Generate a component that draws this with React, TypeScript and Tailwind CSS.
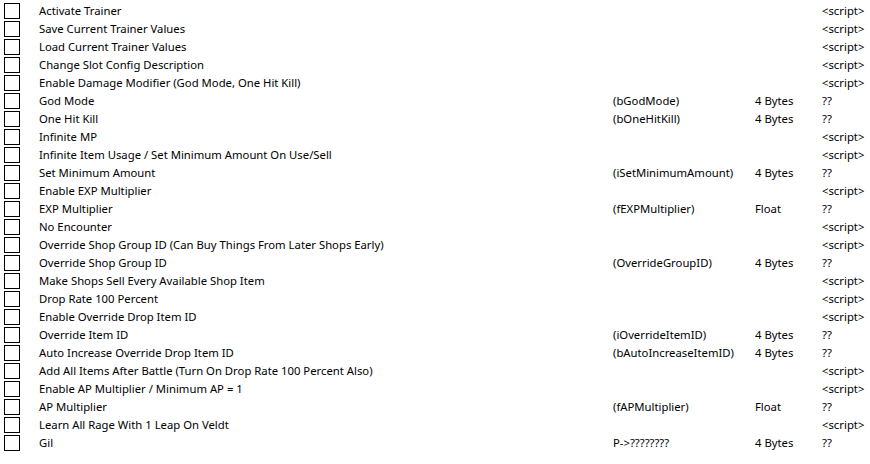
import React from 'react';

type Row = {
  desc: string;
  addr?: string;
  type?: string;
  value: string;
};

const rows: Row[] = [
  { desc: 'Activate Trainer', value: '<script>' },
  { desc: 'Save Current Trainer Values', value: '<script>' },
  { desc: 'Load Current Trainer Values', value: '<script>' },
  { desc: 'Change Slot Config Description', value: '<script>' },
  { desc: 'Enable Damage Modifier (God Mode, One Hit Kill)', value: '<script>' },
  { desc: 'God Mode', addr: '(bGodMode)', type: '4 Bytes', value: '??' },
  { desc: 'One Hit Kill', addr: '(bOneHitKill)', type: '4 Bytes', value: '??' },
  { desc: 'Infinite MP', value: '<script>' },
  { desc: 'Infinite Item Usage / Set Minimum Amount On Use/Sell', value: '<script>' },
  { desc: 'Set Minimum Amount', addr: '(iSetMinimumAmount)', type: '4 Bytes', value: '??' },
  { desc: 'Enable EXP Multiplier', value: '<script>' },
  { desc: 'EXP Multiplier', addr: '(fEXPMultiplier)', type: 'Float', value: '??' },
  { desc: 'No Encounter', value: '<script>' },
  { desc: 'Override Shop Group ID (Can Buy Things From Later Shops Early)', value: '<script>' },
  { desc: 'Override Shop Group ID', addr: '(OverrideGroupID)', type: '4 Bytes', value: '??' },
  { desc: 'Make Shops Sell Every Available Shop Item', value: '<script>' },
  { desc: 'Drop Rate 100 Percent', value: '<script>' },
  { desc: 'Enable Override Drop Item ID', value: '<script>' },
  { desc: 'Override Item ID', addr: '(iOverrideItemID)', type: '4 Bytes', value: '??' },
  { desc: 'Auto Increase Override Drop Item ID', addr: '(bAutoIncreaseItemID)', type: '4 Bytes', value: '??' },
  { desc: 'Add All Items After Battle (Turn On Drop Rate 100 Percent Also)', value: '<script>' },
  { desc: 'Enable AP Multiplier / Minimum AP = 1', value: '<script>' },
  { desc: 'AP Multiplier', addr: '(fAPMultiplier)', type: 'Float', value: '??' },
  { desc: 'Learn All Rage With 1 Leap On Veldt', value: '<script>' },
  { desc: 'Gil', addr: 'P->????????', type: '4 Bytes', value: '??' },
];

export default function App() {
  return (
    <div
      className="w-[870px] h-[464px] pt-[2px] bg-white text-black text-[11.3px] overflow-hidden"
      style={{ fontFamily: '"Noto Sans", "Open Sans", sans-serif' }}
    >
      {rows.map((r, i) => (
        <div key={i} className="flex items-center h-[18px] leading-[18px] whitespace-nowrap">
          <div className="w-[39px] flex items-center pl-[4px]">
            <div className="w-[16px] h-[16px] border border-black bg-white" />
          </div>
          <div className="w-[574px]">{r.desc}</div>
          <div className="w-[142px]">{r.addr ?? ''}</div>
          <div className="w-[67px]">{r.type ?? ''}</div>
          <div>{r.value}</div>
        </div>
      ))}
    </div>
  );
}
